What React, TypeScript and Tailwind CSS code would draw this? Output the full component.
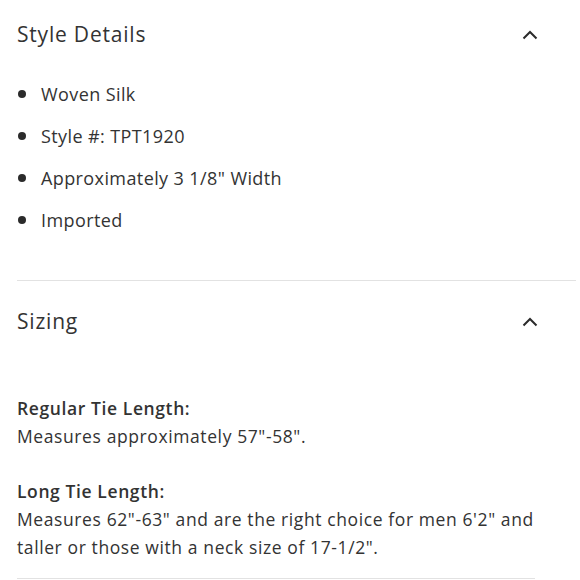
import React from 'react';

const font = { fontFamily: '"Open Sans", "Noto Sans", sans-serif' };

function Chevron() {
  return (
    <svg width="16" height="10" viewBox="0 0 16 10" className="text-[#2b2b2b]">
      <polyline points="1.5,8.5 8,2 14.5,8.5" fill="none" stroke="currentColor" strokeWidth="2" />
    </svg>
  );
}

const details = ['Woven Silk', 'Style #: TPT1920', 'Approximately 3 1/8" Width', 'Imported'];

export default function App() {
  return (
    <div className="w-[580px] h-[580px] overflow-hidden bg-white text-[#333333]" style={font}>
      <section className="ml-[17px] w-[559px] border-b border-[#e2e2e2] pb-[39px]">
        <div className="flex h-[70px] items-center justify-between pr-[38px]">
          <h2 className="text-[21px] tracking-[0.8px]">Style Details</h2>
          <Chevron />
        </div>
        <ul className="mt-[3px]">
          {details.map((d) => (
            <li key={d} className="flex h-[42px] items-center text-[18px] tracking-[0.4px]">
              <span className="mr-[15px] h-[8px] w-[8px] rounded-full bg-[#2b2b2b] ml-[1px]" />
              {d}
            </li>
          ))}
        </ul>
      </section>
      <section className="ml-[17px] w-[518px] border-b border-[#e2e2e2] pb-[17px]">
        <div className="flex h-[82px] w-[559px] items-center justify-between pr-[38px]">
          <h2 className="text-[21px] tracking-[0.8px]">Sizing</h2>
          <Chevron />
        </div>
        <div className="pt-[31px] text-[17.5px] leading-[28px] tracking-[0.6px]">
          <p className="font-semibold">Regular Tie Length:</p>
          <p>Measures approximately 57"-58".</p>
          <p className="mt-[27px] font-semibold">Long Tie Length:</p>
          <p className="w-[545px]">
            Measures 62"-63" and are the right choice for men 6'2" and taller or those with a neck size of 17-1/2".
          </p>
        </div>
      </section>
    </div>
  );
}
